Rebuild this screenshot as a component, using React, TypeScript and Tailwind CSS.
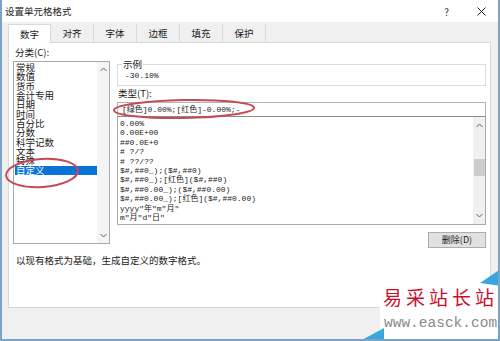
import React from 'react';

const categories = ['常规', '数值', '货币', '会计专用', '日期', '时间', '百分比', '分数', '科学记数', '文本', '特殊', '自定义'];

const formats = [
  '0.00%',
  '0.00E+00',
  '##0.0E+0',
  '# ?/?',
  '# ??/??',
  '$#,##0_);($#,##0)',
  '$#,##0_);[红色]($#,##0)',
  '$#,##0.00_);($#,##0.00)',
  '$#,##0.00_);[红色]($#,##0.00)',
  'yyyy"年"m"月"',
  'm"月"d"日"',
];

const tabs = ['数字', '对齐', '字体', '边框', '填充', '保护'];

const ui = "font-['Noto_Sans_CJK_SC',sans-serif]";
const mono = "font-['Liberation_Mono','Noto_Sans_CJK_SC',monospace]";

function Chevron({ down }: { down?: boolean }) {
  return (
    <svg width="7" height="5" viewBox="0 0 7 5" className="block">
      <path d={down ? 'M0.5 1 L3.5 4 L6.5 1' : 'M0.5 4 L3.5 1 L6.5 4'} stroke="#606060" strokeWidth="1" fill="none" />
    </svg>
  );
}

export default function App() {
  return (
    <div className={`relative w-[500px] h-[341px] overflow-hidden bg-[#f0f0f0] border-x-2 border-b-2 border-[#7aa3c6] text-[#1a1a1a] ${ui}`}>
      {/* title bar */}
      <div className="flex h-[22px] items-center bg-white pl-[3px] pr-[12px] text-[9.5px]">
        <span>设置单元格格式</span>
        <span className="ml-auto mr-[28px] text-[10px] text-[#333]">?</span>
        <svg width="9" height="9" viewBox="0 0 9 9">
          <path d="M0.5 0.5 L8.5 8.5 M8.5 0.5 L0.5 8.5" stroke="#222" strokeWidth="1" />
        </svg>
      </div>

      {/* tabs */}
      <div className="flex h-[20px] items-end px-[6px] text-[9.5px]">
        {tabs.map((t, i) => (
          <div
            key={t}
            className={
              i === 0
                ? 'relative z-10 -mb-px flex h-[19px] w-[43px] items-center justify-center border border-b-0 border-[#d9d9d9] bg-white'
                : 'flex h-[18px] w-[43px] items-center justify-center border-r border-[#d9d9d9]'
            }
          >
            {t}
          </div>
        ))}
      </div>

      {/* panel */}
      <div className="ml-[6px] mr-[7px] flex h-[266px] flex-col border border-[#d9d9d9] bg-white px-[4px] pt-[4px]">
        <div className="flex gap-[7px]">
          {/* left column */}
          <div className="flex w-[97px] flex-col">
            <div className="h-[14px] pl-[2px] text-[9.5px] leading-[10px]">分类(C):</div>
            <div className="flex h-[183px] border border-[#aaaaaa]">
              <div className="flex-1 pt-px pl-[2px] text-[9.5px] leading-[9.35px]">
                {categories.map((c, i) => (
                  <div key={c} className={i === categories.length - 1 ? '-ml-px pl-px bg-[#0a74d6] text-white' : ''}>
                    {c}
                  </div>
                ))}
              </div>
              <div className="flex w-[12px] flex-col items-center justify-between bg-[#f5f5f5] py-[5px]">
                <Chevron />
                <Chevron down />
              </div>
            </div>
          </div>

          {/* right column */}
          <div className="flex flex-1 flex-col pt-[12px]">
            <fieldset className="h-[27px] border border-[#dcdcdc] px-[4px]">
              <legend className="px-[1px] text-[9.5px] leading-[10px]">示例</legend>
              <div className={`pl-[3px] pt-[2px] text-[8px] leading-[10px] ${mono}`}>-30.10%</div>
            </fieldset>
            <div className="h-[16px] pt-[2px] pl-px text-[9.5px] leading-[10px]">类型(T):</div>
            <div className={`flex h-[15px] items-center border border-[#b4b4b4] border-b-[#8c8c8c] pl-[4px] text-[8px] ${mono}`}>
              [绿色]0.00%;[红色]-0.00%;-
            </div>
            <div className="flex h-[108px] border border-t-0 border-[#aaaaaa]">
              <div className={`flex-1 pt-[2px] pl-[2px] text-[8px] leading-[9.4px] ${mono}`}>
                {formats.map((f) => (
                  <div key={f} className="whitespace-pre">{f}</div>
                ))}
              </div>
              <div className="flex w-[12px] flex-col items-center bg-[#f0f0f0] py-[6px]">
                <Chevron />
                <div className="mt-[31px] h-[17px] w-[11px] bg-[#cdcdcd]" />
                <div className="flex-1" />
                <Chevron down />
              </div>
            </div>
            <div className="mt-[7px] flex justify-end">
              <button className="flex h-[16px] w-[58px] items-center justify-center border border-[#adadad] bg-[#e1e1e1] text-[9px]">
                删除(D)
              </button>
            </div>
          </div>
        </div>
        <div className="mt-[7px] pl-[3px] text-[9.5px] leading-[10px]">以现有格式为基础，生成自定义的数字格式。</div>
      </div>

      {/* red annotation ellipses */}
      <svg className="pointer-events-none absolute left-0 top-0" width="500" height="341">
        <ellipse cx="40" cy="173" rx="36" ry="14" fill="none" stroke="#c64a55" strokeWidth="2" transform="rotate(-4 40 173)" />
        <ellipse cx="182" cy="109" rx="70" ry="9" fill="none" stroke="#c64a55" strokeWidth="2" transform="rotate(-1 182 109)" />
      </svg>

      {/* watermark */}
      <div className="absolute right-[-2px] bottom-[-2px] w-[120px] h-[58px] bg-white">
        <div className="whitespace-nowrap pl-[3px] pt-[3px] text-[19px] leading-[22px] tracking-[4px] text-[#c8102e] font-['Noto_Sans_CJK_SC',serif]">易采站长站</div>
        <div className="mt-[8px] whitespace-nowrap pl-[4px] text-[14.5px] leading-[14px] text-[#8a8a8a] font-['Liberation_Mono',monospace]">www.easck.com</div>
      </div>
      <svg className="pointer-events-none absolute left-0 top-0" width="500" height="341">
        <polygon points="478,283 500,268 500,286" fill="#3aa6de" />
        <polygon points="358,341 382,328 382,341" fill="#3aa6de" />
      </svg>
    </div>
  );
}
